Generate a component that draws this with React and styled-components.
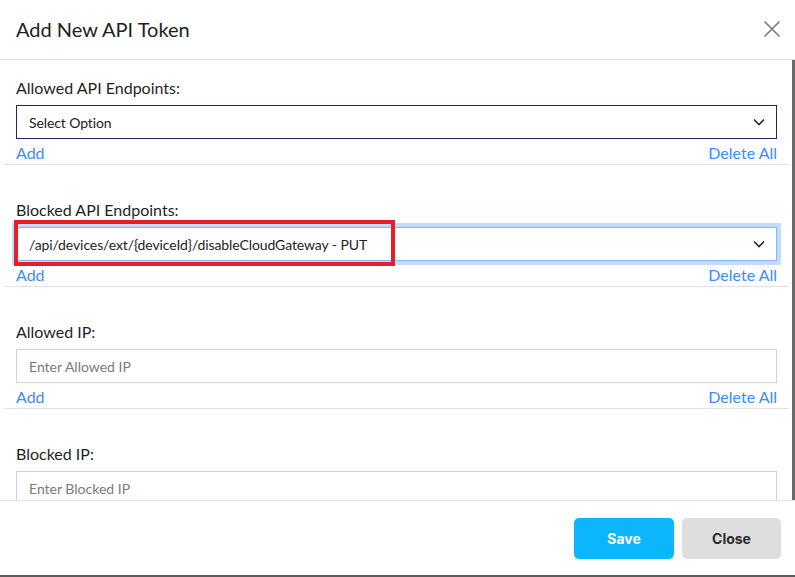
import React from "react";
import styled, { createGlobalStyle } from "styled-components";

const Global = createGlobalStyle`
  html, body { margin: 0; padding: 0; background: #fff; }
  body { font-family: Lato, "Open Sans", Arial, sans-serif; color: #222; }
  * { box-sizing: border-box; }
`;

const Modal = styled.div`
  width: 795px;
  height: 577px;
  display: flex;
  flex-direction: column;
  background: #fff;
  border-bottom: 2px solid #5c5c5c;
  overflow: hidden;
`;

const Header = styled.div`
  height: 60px;
  flex: none;
  display: flex;
  align-items: center;
  justify-content: space-between;
  padding: 0 14px 1px 16px;
  border-bottom: 1px solid #dedede;
`;

const Title = styled.h2`
  margin: 0;
  font-size: 20px;
  font-weight: 400;
  color: #1e1e1e;
`;

const CloseX = styled.button`
  border: 0;
  background: none;
  padding: 0;
  width: 18px;
  height: 18px;
  display: flex;
  cursor: pointer;
`;

const BodyWrap = styled.div`
  flex: 1;
  display: flex;
  min-height: 0;
`;

const Body = styled.div`
  flex: 1;
  padding-left: 4px;
  overflow: hidden;
`;

const ScrollTrack = styled.div`
  width: 6px;
  flex: none;
  display: flex;
  justify-content: flex-end;
`;

const ScrollThumb = styled.div`
  width: 3px;
  height: 100%;
  background: #6a6a6a;
`;

const Section = styled.div`
  position: relative;
  padding: ${(p) => (p.$first ? "19px" : "36px")} 12px 0;
  border-bottom: 1px solid #e3e3e3;
`;

const Label = styled.div`
  font-size: 16px;
  line-height: 18px;
  margin-bottom: 8px;
  color: #1f1f1f;
`;

const SelectBox = styled.div`
  height: 34px;
  display: flex;
  align-items: center;
  justify-content: space-between;
  padding: 0 10px 0 12px;
  font-size: 14px;
  letter-spacing: -0.1px;
  color: #222;
  border: 1px solid ${(p) => (p.$focus ? "#86b5f3" : "#1b2a66")};
  box-shadow: ${(p) => (p.$focus ? "0 0 0 4px #c3dbfc" : "none")};
`;

const TextInput = styled.input`
  width: 100%;
  height: 34px;
  padding: 0 12px;
  font-family: inherit;
  font-size: 14px;
  color: #222;
  border: 1px solid #cfd4da;
  outline: none;
  &::placeholder { color: #7a7a7a; }
`;

const Links = styled.div`
  height: 25px;
  display: flex;
  align-items: center;
  justify-content: space-between;
  padding-top: 1px;
`;

const LinkBtn = styled.a`
  font-size: 16px;
  color: #3a8bfb;
  cursor: pointer;
  text-decoration: none;
`;

const Highlight = styled.div`
  position: absolute;
  left: 10px;
  top: 55px;
  width: 381px;
  height: 46px;
  border: 4px solid #e61e2b;
  pointer-events: none;
`;

const Footer = styled.div`
  flex: none;
  height: 75px;
  display: flex;
  align-items: center;
  justify-content: flex-end;
  gap: 8px;
  padding: 0 14px 0 0;
  border-top: 1px solid #e3e3e3;
`;

const Button = styled.button`
  height: 41px;
  width: ${(p) => (p.$primary ? "100px" : "99px")};
  border: 0;
  border-radius: 5px;
  font-family: Inter, "Noto Sans", Arial, sans-serif;
  font-weight: 700;
  font-size: 14px;
  color: ${(p) => (p.$primary ? "#fff" : "#2a2a2a")};
  background: ${(p) => (p.$primary ? "#0bb6fc" : "#dedede")};
  cursor: pointer;
`;

const Chevron = () => (
  <svg width="14" height="14" viewBox="0 0 14 14" fill="none">
    <path d="M2 4.5l5 5 5-5" stroke="#2b2b2b" strokeWidth="1.6" />
  </svg>
);

function SelectField({ label, value, focus, first, highlight }) {
  return (
    <Section $first={first}>
      <Label>{label}</Label>
      <SelectBox $focus={focus}>
        <span>{value}</span>
        <Chevron />
      </SelectBox>
      <Links>
        <LinkBtn>Add</LinkBtn>
        <LinkBtn>Delete All</LinkBtn>
      </Links>
      {highlight && <Highlight />}
    </Section>
  );
}

function InputField({ label, placeholder, links = true }) {
  return (
    <Section>
      <Label>{label}</Label>
      <TextInput placeholder={placeholder} />
      {links && (
        <Links>
          <LinkBtn>Add</LinkBtn>
          <LinkBtn>Delete All</LinkBtn>
        </Links>
      )}
    </Section>
  );
}

export default function App() {
  return (
    <>
      <Global />
      <Modal>
        <Header>
          <Title>Add New API Token</Title>
          <CloseX aria-label="close">
            <svg width="18" height="18" viewBox="0 0 18 18">
              <path d="M1.5 1.5l15 15M16.5 1.5l-15 15" stroke="#7a7a7a" strokeWidth="1.6" />
            </svg>
          </CloseX>
        </Header>
        <BodyWrap>
          <Body>
            <SelectField first label="Allowed API Endpoints:" value="Select Option" />
            <SelectField
              label="Blocked API Endpoints:"
              value="/api/devices/ext/{deviceId}/disableCloudGateway - PUT"
              focus
              highlight
            />
            <InputField label="Allowed IP:" placeholder="Enter Allowed IP" />
            <InputField label="Blocked IP:" placeholder="Enter Blocked IP" links={false} />
          </Body>
          <ScrollTrack>
            <ScrollThumb />
          </ScrollTrack>
        </BodyWrap>
        <Footer>
          <Button $primary>Save</Button>
          <Button>Close</Button>
        </Footer>
      </Modal>
    </>
  );
}
